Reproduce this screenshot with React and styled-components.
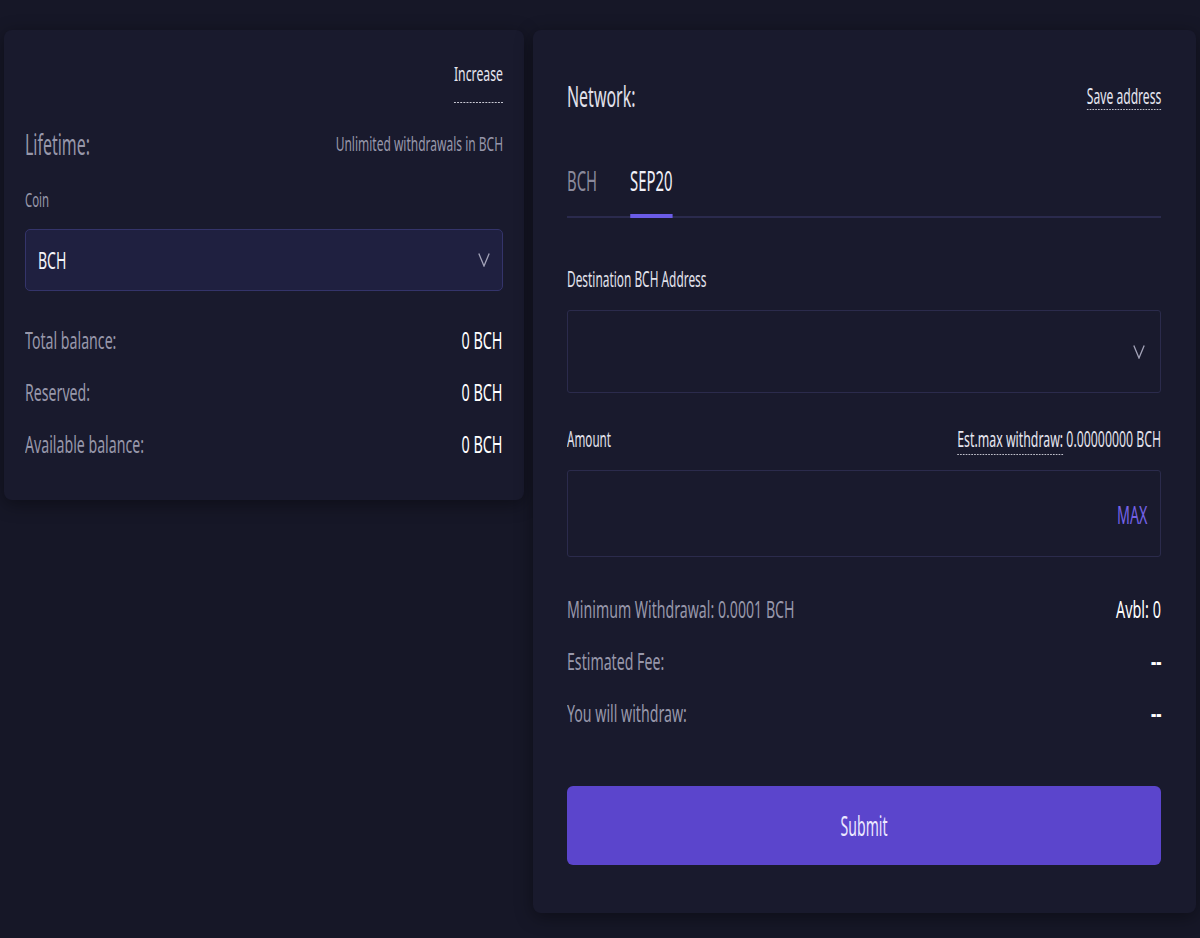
import styled, { createGlobalStyle, css } from "styled-components";

const Global = createGlobalStyle`
  html, body {
    margin: 0;
    padding: 0;
    background: #161727;
    font-family: "Noto Sans", "DejaVu Sans", sans-serif;
  }
`;

// the UI font is very condensed; squeeze the regular face horizontally
const narrow = (sx, origin = "left") => css`
  display: inline-block;
  white-space: nowrap;
  transform: scaleX(${sx});
  transform-origin: ${origin} center;
`;

const Page = styled.div`
  width: 1200px;
  height: 938px;
  box-sizing: border-box;
  padding: 30px 4px 0 4px;
  display: flex;
  align-items: flex-start;
  gap: 9px;
`;

const Card = styled.div`
  background: #191a2d;
  border-radius: 8px;
  box-shadow: rgba(0, 0, 0, 0.4) 0 4px 18px;
  box-sizing: border-box;
  width: ${(p) => p.w}px;
  padding: ${(p) => p.pad};
  display: flex;
  flex-direction: column;
`;

const Row = styled.div`
  display: flex;
  justify-content: ${(p) => p.justify || "space-between"};
  align-items: ${(p) => p.align || "center"};
  height: ${(p) => (p.h ? p.h + "px" : "auto")};
  margin-top: ${(p) => p.mt || 0}px;
`;

const Dashed = styled.span`
  color: #e6e6f0;
  font-size: ${(p) => p.size || 22}px;
  line-height: 24px;
  border-bottom: 1.5px dashed #f2f2fa;
  padding-bottom: ${(p) => p.gap || 2}px;
  ${(p) => p.sx && narrow(p.sx, "right")}
`;

const Title = styled.div`
  font-size: 29px;
  line-height: 40px;
  color: ${(p) => (p.light ? "#e2e2ec" : "#9797aa")};
  ${narrow(0.55)}
`;

const Muted = styled.div`
  font-size: 20px;
  line-height: 24px;
  color: #9797aa;
  margin-top: ${(p) => p.mt || 0}px;
  ${(p) => narrow(p.sx || 0.6, p.origin)}
`;

const Label = styled.div`
  font-size: 22px;
  line-height: 24px;
  color: #e2e2ec;
  margin-top: ${(p) => p.mt || 0}px;
  ${(p) => narrow(p.sx || 0.54, p.origin)}
`;

const Select = styled.div`
  height: 62px;
  margin-top: 17px;
  box-sizing: border-box;
  border: 1.5px solid #34346a;
  border-radius: 5px;
  background: #1f2040;
  display: flex;
  align-items: center;
  justify-content: space-between;
  padding: 0 12px 0 12px;
`;

const SelectValue = styled.span`
  color: #f4f4fa;
  font-size: 23px;
  ${narrow(0.61)}
`;

const Input = styled.div`
  height: ${(p) => p.h}px;
  margin-top: ${(p) => p.mt}px;
  box-sizing: border-box;
  border: 1.5px solid #2b2b4c;
  border-radius: 3px;
  display: flex;
  align-items: center;
  justify-content: flex-end;
  padding: 0 ${(p) => p.pr || 13}px 0 13px;
`;

const Max = styled.span`
  color: #7462e6;
  font-size: 26px;
  ${narrow(0.55, "right")}
`;

const Stats = styled.div`
  display: flex;
  flex-direction: column;
  margin-top: ${(p) => p.mt}px;
`;

const Stat = styled.div`
  display: flex;
  justify-content: space-between;
  align-items: center;
  height: 52px;
  font-size: 24px;
`;

const StatLabel = styled.span`
  color: #9797aa;
  ${narrow(0.59)}
`;

const StatValue = styled.span`
  color: #ffffff;
  font-weight: ${(p) => (p.bold ? 700 : 400)};
  ${(p) => narrow(p.bold ? 0.68 : 0.6, "right")}
`;

const Tabs = styled.div`
  border-bottom: 2px solid #2a2a4d;
  margin-top: 49px;
`;

const TabList = styled.div`
  display: flex;
  gap: 60px;
  margin-bottom: -2px;
  transform: scaleX(0.55);
  transform-origin: left center;
`;

const Tab = styled.div`
  font-size: 27px;
  line-height: 32px;
  padding-bottom: 17px;
  color: ${(p) => (p.active ? "#f0f0f8" : "#8a8a9c")};
  border-bottom: 4px solid ${(p) => (p.active ? "#6b5ce7" : "transparent")};
`;

const Submit = styled.button`
  height: 79px;
  margin-top: 48px;
  border: none;
  border-radius: 6px;
  background: #5b45cc;
  font-family: inherit;
`;

const SubmitText = styled.span`
  color: #ece8ff;
  font-size: 27px;
  ${narrow(0.52, "center")}
`;

const Chevron = () => (
  <svg width="12" height="14" viewBox="0 0 12 14">
    <polyline points="0.8,0.5 6,13 11.2,0.5" fill="none" stroke="#a3a3b8" strokeWidth="1.3" />
  </svg>
);

export default function App() {
  return (
    <>
      <Global />
      <Page>
        <Card w={520} pad="32px 21px 31px 21px">
          <Row justify="flex-end">
            <Dashed size={19} gap={16} sx={0.645}>Increase</Dashed>
          </Row>
          <Row h={40} mt={21}>
            <Title>Lifetime:</Title>
            <Muted origin="right">Unlimited withdrawals in BCH</Muted>
          </Row>
          <Row mt={24}>
            <Muted sx={0.57}>Coin</Muted>
          </Row>
          <Select>
            <SelectValue>BCH</SelectValue>
            <Chevron />
          </Select>
          <Stats mt={22}>
            <Stat>
              <StatLabel>Total balance:</StatLabel>
              <StatValue>0 BCH</StatValue>
            </Stat>
            <Stat>
              <StatLabel>Reserved:</StatLabel>
              <StatValue>0 BCH</StatValue>
            </Stat>
            <Stat>
              <StatLabel>Available balance:</StatLabel>
              <StatValue>0 BCH</StatValue>
            </Stat>
          </Stats>
        </Card>
        <Card w={663} pad="46px 35px 48px 34px">
          <Row h={40}>
            <Title light>Network:</Title>
            <Dashed gap={2} sx={0.55}>Save address</Dashed>
          </Row>
          <Tabs>
            <TabList>
              <Tab>BCH</Tab>
              <Tab active>SEP20</Tab>
            </TabList>
          </Tabs>
          <Row mt={48}>
            <Label>Destination BCH Address</Label>
          </Row>
          <Input h={83} mt={20} pr={15}>
            <Chevron />
          </Input>
          <Row h={28} mt={33} align="flex-start">
            <Label sx={0.53}>Amount</Label>
            <Label sx={0.56} origin="right">
              <Dashed gap={1}>Est.max withdraw:</Dashed> 0.00000000 BCH
            </Label>
          </Row>
          <Input h={87} mt={16}>
            <Max>MAX</Max>
          </Input>
          <Stats mt={25}>
            <Stat>
              <StatLabel>Minimum Withdrawal: 0.0001 BCH</StatLabel>
              <StatValue>Avbl: 0</StatValue>
            </Stat>
            <Stat>
              <StatLabel>Estimated Fee:</StatLabel>
              <StatValue bold>--</StatValue>
            </Stat>
            <Stat>
              <StatLabel>You will withdraw:</StatLabel>
              <StatValue bold>--</StatValue>
            </Stat>
          </Stats>
          <Submit>
            <SubmitText>Submit</SubmitText>
          </Submit>
        </Card>
      </Page>
    </>
  );
}
